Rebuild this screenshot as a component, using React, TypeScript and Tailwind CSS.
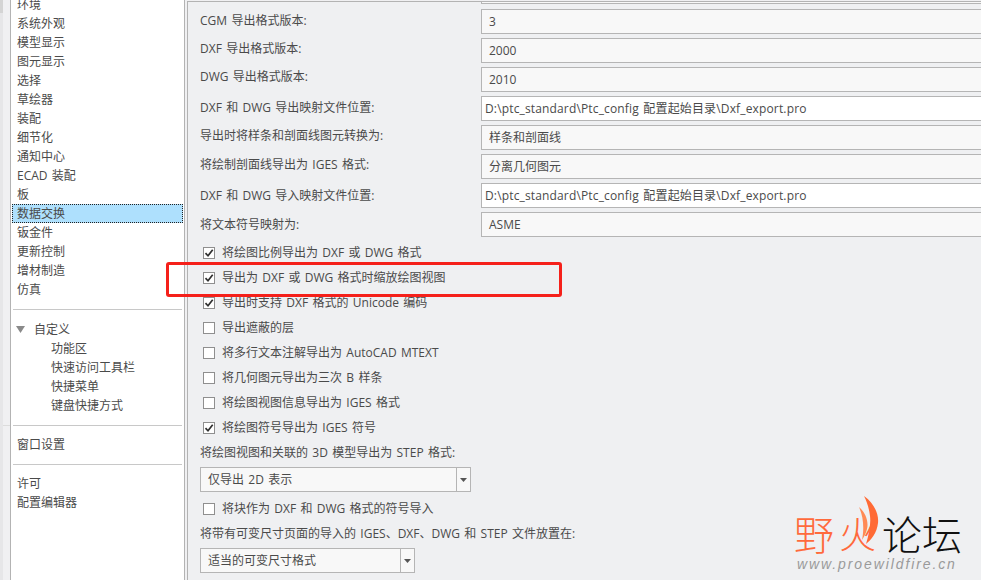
const navTop = ["环境", "系统外观", "模型显示", "图元显示", "选择", "草绘器", "装配", "细节化", "通知中心", "ECAD 装配", "板"];
const navBottom = ["钣金件", "更新控制", "增材制造", "仿真"];
const customize = ["功能区", "快速访问工具栏", "快捷菜单", "键盘快捷方式"];

const fields = [
  { label: "CGM 导出格式版本:", value: "3", lift: "pb-[2px]" },
  { label: "DXF 导出格式版本:", value: "2000", lift: "pb-[4px]" },
  { label: "DWG 导出格式版本:", value: "2010", lift: "pb-[6px]" },
  { label: "DXF 和 DWG 导出映射文件位置:", value: "D:\\ptc_standard\\Ptc_config 配置起始目录\\Dxf_export.pro", edit: true, lift: "pb-[2px]" },
  { label: "导出时将样条和剖面线图元转换为:", value: "样条和剖面线", lift: "pb-[4px]" },
  { label: "将绘制剖面线导出为 IGES 格式:", value: "分离几何图元", lift: "pb-[4px]" },
  { label: "DXF 和 DWG 导入映射文件位置:", value: "D:\\ptc_standard\\Ptc_config 配置起始目录\\Dxf_export.pro", edit: true, lift: "" },
  { label: "将文本符号映射为:", value: "ASME", lift: "" },
];

const checks = [
  { label: "将绘图比例导出为 DXF 或 DWG 格式", on: true },
  { label: "导出为 DXF 或 DWG 格式时缩放绘图视图", on: true },
  { label: "导出时支持 DXF 格式的 Unicode 编码", on: true },
  { label: "导出遮蔽的层", on: false },
  { label: "将多行文本注解导出为 AutoCAD MTEXT", on: false },
  { label: "将几何图元导出为三次 B 样条", on: false },
  { label: "将绘图视图信息导出为 IGES 格式", on: false },
  { label: "将绘图符号导出为 IGES 符号", on: true },
];

function NavItem({ text }: { text: string }) {
  return <div className="h-[19px] pl-[5px] leading-[19px]">{text}</div>;
}

function CheckRow({ label, on }: { label: string; on: boolean }) {
  return (
    <div className="flex h-[25px] items-center pl-[15px]">
      <span className="flex h-[12px] w-[12px] items-center justify-center border border-[#8f8f8f] bg-white">
        {on && (
          <svg width="10" height="10" viewBox="0 0 10 10" fill="none">
            <path d="M1.5 5.2 L4 7.8 L8.7 1.8" stroke="#2f2f2f" strokeWidth="1.7" />
          </svg>
        )}
      </span>
      <span className="ml-[7px]">{label}</span>
    </div>
  );
}

function Dropdown({ text, width }: { text: string; width: string }) {
  return (
    <div className={`ml-[12px] flex h-[25px] border border-[#b5b5b5] bg-[#f8f8f8] ${width}`}>
      <div className="flex-1 pl-[7px] leading-[23px]">{text}</div>
      <div className="flex w-[14px] items-center justify-center border-l border-[#b5b5b5]">
        <svg width="7" height="4" viewBox="0 0 7 4">
          <path d="M0 0 H7 L3.5 4 Z" fill="#555" />
        </svg>
      </div>
    </div>
  );
}

export default function App() {
  return (
    <div className="relative flex h-[580px] w-[981px] overflow-hidden bg-[#f0f0f2] text-[12px] text-[#4a4a4a] [word-spacing:1.2px] [font-family:'Open_Sans','Noto_Sans_CJK_SC',sans-serif]">
      {/* left edge */}
      <div className="w-[3px] shrink-0 bg-[#e6e6e8]">
        <div className="h-[13px] bg-[#d4d4d4]" />
      </div>
      <div className="w-[7px] shrink-0 bg-[#f0f0f2]">
        <div className="h-[426px] border-b border-[#dcdcdc]" />
      </div>

      {/* sidebar */}
      <div className="w-[175px] shrink-0 border-x border-[#b3b3b3] bg-white pl-px pr-px">
        <div className="-mt-[5px]">
          {navTop.map((n) => (
            <NavItem key={n} text={n} />
          ))}
          <div className="h-[19px] border border-dotted border-[#222] bg-[#aee0fd] pl-[4px] leading-[17px]">数据交换</div>
          {navBottom.map((n) => (
            <NavItem key={n} text={n} />
          ))}
          <div className="mx-px mb-[10px] mt-[10px] h-px bg-[#c8c8c8]" />
          <div className="flex h-[19px] items-center pl-[4px]">
            <svg width="9" height="7" viewBox="0 0 9 7">
              <path d="M0 0 H9 L4.5 7 Z" fill="#8a8a8a" />
            </svg>
            <span className="ml-[9px]">自定义</span>
          </div>
          {customize.map((c) => (
            <div key={c} className="h-[19px] pl-[39px] leading-[19px]">
              {c}
            </div>
          ))}
          <div className="mx-px mb-[9px] mt-[10px] h-px bg-[#c8c8c8]" />
          <NavItem text="窗口设置" />
          <div className="mx-px mb-[9px] mt-[10px] h-px bg-[#c8c8c8]" />
          <NavItem text="许可" />
          <NavItem text="配置编辑器" />
        </div>
      </div>

      {/* settings panel */}
      <div className="ml-[2px] mt-px flex-1 border-l border-t border-[#b3b3b3] bg-[#eff0f2]">
        <div className="ml-[293px] h-[2px] border-b border-l border-[#b5b5b5] bg-[#f8f8f8]" />
        <div className="mt-[5px] flex flex-col gap-[4px]">
          {fields.map((f) => (
            <div key={f.label} className="flex h-[25px]">
              <div className={`flex w-[293px] shrink-0 items-center pl-[12px] ${f.lift}`}>{f.label}</div>
              <div
                className={`flex-1 border border-r-0 border-[#b5b5b5] leading-[23px] ${f.edit ? "bg-white pl-[3px] tracking-[0.15px]" : "bg-[#f8f8f8] pl-[7px]"}`}
              >
                {f.value}
              </div>
            </div>
          ))}
        </div>

        <div className="mt-[3px]">
          {checks.map((c) => (
            <CheckRow key={c.label} label={c.label} on={c.on} />
          ))}
        </div>

        <div className="h-[25px] pl-[12px] leading-[25px]">将绘图视图和关联的 3D 模型导出为 STEP 格式:</div>
        <div className="mt-[2px]">
          <Dropdown text="仅导出 2D 表示" width="w-[271px]" />
        </div>
        <div className="mt-[4px]">
          <CheckRow label="将块作为 DXF 和 DWG 格式的符号导入" on={false} />
        </div>
        <div className="h-[25px] pl-[12px] leading-[25px]">将带有可变尺寸页面的导入的 IGES、DXF、DWG 和 STEP 文件放置在:</div>
        <div className="mt-[2px]">
          <Dropdown text="适当的可变尺寸格式" width="w-[215px]" />
        </div>
      </div>

      {/* red annotation */}
      <div className="absolute left-[166px] top-[262px] h-[35px] w-[396px] rounded-[3px] border-[3px] border-[#f5201a]" />

      {/* watermark */}
      <div className="absolute left-[795px] top-[496px] h-[78px] w-[170px] [font-family:'Noto_Sans_CJK_SC',sans-serif]">
        <div className="absolute -left-[1px] top-[17px] text-[40px] leading-[40px] font-light text-[#ff6a3c]">野</div>
        <div className="absolute left-[44px] top-[19px] text-[37px] leading-[37px] font-light text-[#ff6a3c]">火</div>
        <div className="absolute left-[87px] top-[17px] text-[40px] leading-[40px] font-light text-[#111]">论坛</div>
        <svg className="absolute left-[55px] top-0" width="34" height="50" viewBox="0 0 34 50">
          <path d="M14 0 C24 7 29 18 28 27 C27 37 21 44 16 48 C19 38 21 28 20 20 C19 12 17 6 14 0 Z" fill="#ff6a35" />
          <path d="M9 11 C15 16 19 25 17 33 C16 37 14 41 12 44 C14 34 14 22 9 11 Z" fill="#ff8a55" />
        </svg>
        <div className="absolute left-[2px] top-[60px] text-[14px] leading-[16px] tracking-[1.9px] text-[#9a9a9a] italic [font-family:'Liberation_Sans',sans-serif]">
          www.proewildfire.cn
        </div>
      </div>
    </div>
  );
}
